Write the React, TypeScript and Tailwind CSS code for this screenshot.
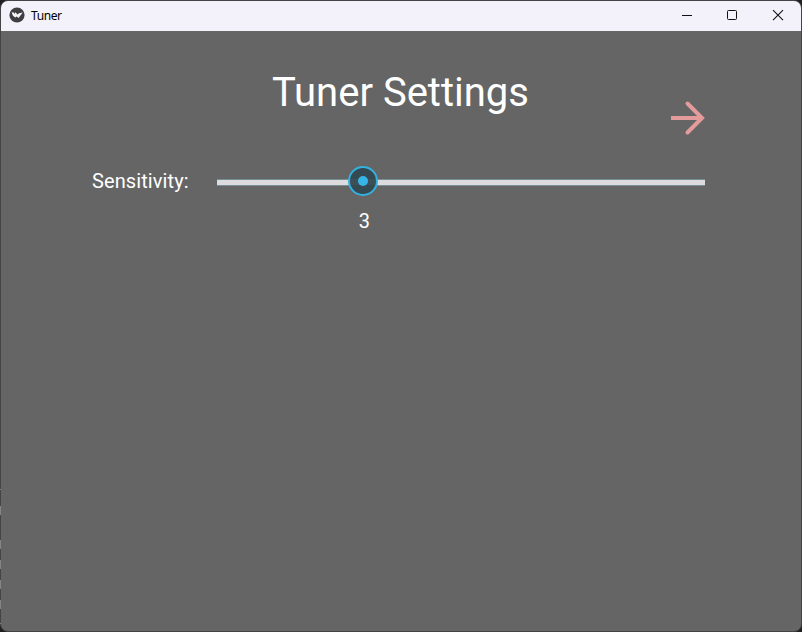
const edgeMarks = [
  { top: 489, height: 1 },
  { top: 506, height: 9 },
  { top: 540, height: 9 },
  { top: 560, height: 9 },
  { top: 580, height: 9 },
  { top: 600, height: 9 },
  { top: 623, height: 1 },
];

function TitleBar() {
  return (
    <header className="flex h-[30px] shrink-0 items-center justify-between bg-[#f3f1f9] text-black">
      <div className="flex items-center gap-[6px] pl-2">
        <svg width="16" height="16" viewBox="0 0 16 16" className="-mt-[2px]">
          <circle cx="8" cy="8" r="7.6" fill="#3f3f42" />
          <path d="M2.6 5.4L4.6 5.2L5.4 7L6.4 5.2L8.6 7.4L10 6.2L13.8 5.6L11.6 8.2L9.6 11L7.8 9.6L6.2 10.6L4 8.8Z" fill="#f5f5f8" />
        </svg>
        <span className="font-['Noto_Sans',sans-serif] text-[12px] leading-4 tracking-[-0.4px]">Tuner</span>
      </div>
      <div className="-mr-px flex">
        <svg width="45" height="30" viewBox="0 0 45 30" fill="none" stroke="#111">
          <path d="M16 14.5H26" />
        </svg>
        <svg width="46" height="30" viewBox="0 0 46 30" fill="none" stroke="#111">
          <rect x="16.5" y="9.5" width="9" height="9" rx="1" />
        </svg>
        <svg width="45" height="30" viewBox="0 0 45 30" fill="none" stroke="#111" strokeWidth="1.1">
          <path d="M16 9.2L26 19.2M26 9.2L16 19.2" />
        </svg>
      </div>
    </header>
  );
}

function Slider({ value, max }: { value: number; max: number }) {
  const left = `${(value / max) * 100}%`;
  return (
    <div className="relative h-[30px] w-[488px]">
      <div className="mt-[13px] h-[7px] border-y border-[#779097] bg-[#dddbdd]" />
      <svg
        className="absolute top-0 -ml-[15px]"
        style={{ left }}
        width="30"
        height="30"
        viewBox="0 0 30 30"
      >
        <circle cx="15" cy="15" r="14" fill="#344951" />
        <path d="M2 13H28V19H2Z" fill="#3c5057" />
        <circle cx="15" cy="15" r="14" fill="none" stroke="#33b1e1" strokeWidth="2" />
        <circle cx="15" cy="15" r="5" fill="#36b6e7" />
      </svg>
      <span className="absolute top-[43px] w-10 -translate-x-[19px] text-center text-[20px] leading-6" style={{ left }}>
        {value}
      </span>
    </div>
  );
}

export default function App() {
  return (
    <div className="relative h-[632px] w-[802px] bg-[#202022] font-[Roboto,sans-serif]">
      <div className="flex h-full flex-col overflow-hidden rounded-[8px] border border-[#444446] bg-[#656565] text-white">
        <TitleBar />
        <main className="flex flex-1 flex-col">
          <h1 className="mt-[38px] pr-px text-center text-[40px] leading-[47px] font-normal">Tuner Settings</h1>
          <div className="-mt-[16px] flex justify-end pr-[95px]">
            <svg width="36" height="36" viewBox="0 0 36 36" fill="none" stroke="#e49b9b" strokeWidth="4">
              <path d="M1 18H32" />
              <path d="M17.5 3.5L32 18L17.5 32.5" strokeLinecap="round" strokeLinejoin="miter" />
            </svg>
          </div>
          <div className="mt-[30px] flex items-center pl-[91px]">
            <span className="w-[125px] text-[20px] leading-6 tracking-[0.1px]">Sensitivity:</span>
            <Slider value={3} max={10} />
          </div>
        </main>
      </div>
      {edgeMarks.map((mark) => (
        <span key={mark.top} className="absolute left-0 w-px bg-[#858585]" style={mark} />
      ))}
    </div>
  );
}
